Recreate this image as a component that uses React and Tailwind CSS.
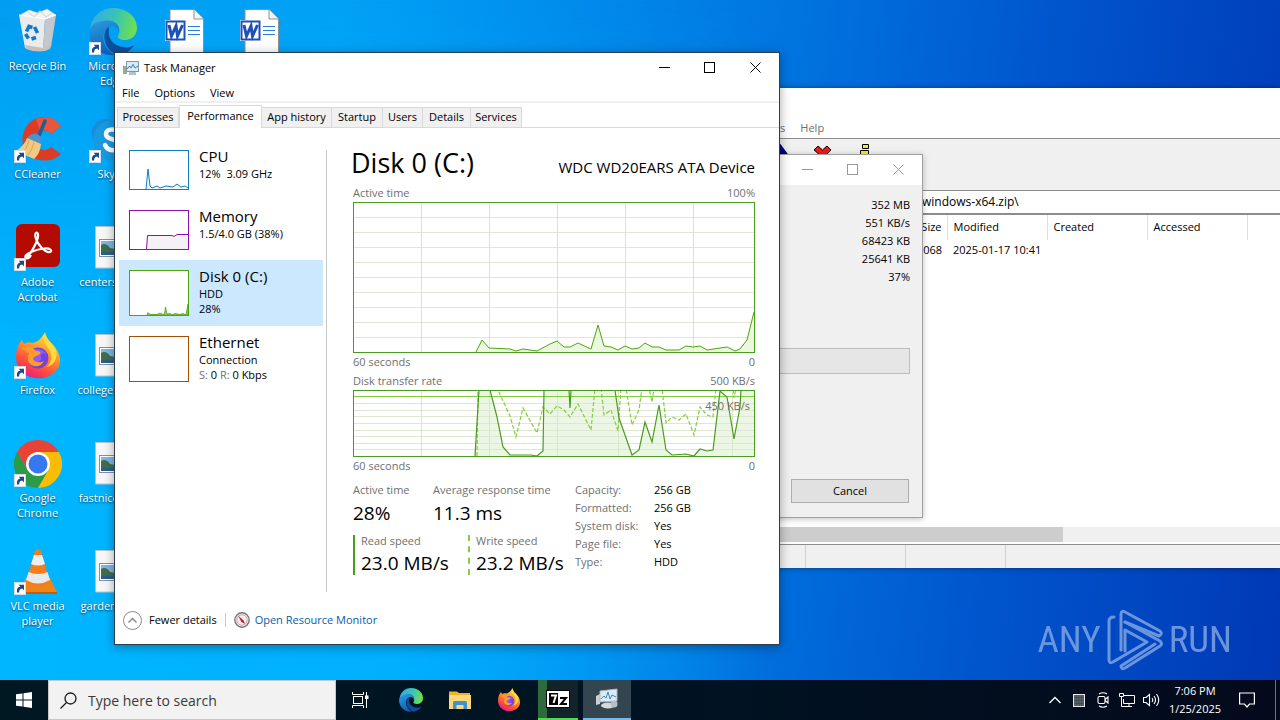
import React from "react";

const BLUE_TEXT = "text-[#0b5cad]";

/* ---------- desktop icons ---------- */

function Shortcut() {
  return (
    <g>
      <rect x="0.5" y="34.5" width="11" height="12" fill="#fff" stroke="#d5dbe3" />
      <path d="M3 44.5 C2.6 40.5 4.2 38.8 6.4 38.6 L4.6 36.8 H10 V42.2 L8.2 40.4 C5.8 40.8 5 42 5.2 44.5 Z" fill="#1d4a8a" />
    </g>
  );
}

function EdgeShape() {
  return (
    <g>
      <defs>
        <linearGradient id="edgeTop" x1="0" y1="0.3" x2="1" y2="0.5">
          <stop offset="0" stopColor="#37a9e8" />
          <stop offset="0.5" stopColor="#37c3ba" />
          <stop offset="1" stopColor="#6fe04c" />
        </linearGradient>
        <linearGradient id="edgeLeft" x1="0" y1="0" x2="0.4" y2="1">
          <stop offset="0" stopColor="#2aa0e0" />
          <stop offset="1" stopColor="#0f5fb8" />
        </linearGradient>
      </defs>
      <path d="M1 22 C2 9 12 0 24 0 C38 0 48 9 48 20 C48 27 43 32 36 32 C31 32 28 30 29 28 C32 25 31 13 20 13 C10 13 3 18 1 22 Z" fill="url(#edgeTop)" />
      <path d="M0 24 C2 15 10 12 19 12.500 C27 13 31 18 30 24 C29 19 24 17 20 19 C11 23 12 40 26 47 C12 49 0 38 0 24 Z" fill="url(#edgeLeft)" />
      <path d="M20 18.500 C12 24 14 42 29 47.500 C36 46.500 42 42 45 37.500 C36 42 22 38 20 27 C19.500 23 20 21 20 18.500 Z" fill="#0c4f9c" />
    </g>
  );
}

function EdgeIcon() {
  return (
    <svg viewBox="0 0 48 48" className="h-12 w-12" aria-hidden="true">
      <EdgeShape />
      <Shortcut />
    </svg>
  );
}

function RecycleIcon() {
  return (
    <svg viewBox="0 0 48 48" className="h-12 w-12" aria-hidden="true">
      <path d="M6 7 L15 2 L24 5 L33 1 L42 7 L38 12 H10 Z" fill="#f4f4f4" stroke="#c9ccd0" strokeWidth="0.6" />
      <path d="M14 4 L20 9 L26 3 L32 9 L38 5" stroke="#d5d8dc" fill="none" strokeWidth="1.200" />
      <path d="M5 7 L31 11 L29 43 L11 40 Z" fill="#e9ebed" />
      <path d="M31 11 L42 7 L37 39 L29 43 Z" fill="#c4c8cc" />
      <path d="M5 7 L31 11 L42 7" fill="none" stroke="#fff" strokeWidth="1" />
      <path d="M11 37 L29 40 L37 36.500 L36 41 Q26 46 12 41 Z" fill="#cdbfb6" />
      <g fill="none" stroke="#1378d0" strokeWidth="3.600">
        <path d="M12.500 23.500 L15 18.500 L18.500 19.500" />
        <path d="M20.500 19 L23.500 25" />
        <path d="M22 29.500 L17.500 31" />
        <path d="M14.500 30.500 L11.500 26" />
      </g>
    </svg>
  );
}

function WordIcon() {
  return (
    <svg viewBox="3 0 48 48" className="h-12 w-12" aria-hidden="true">
      <path d="M9 1.500 H33 L42.500 11 V47 H9 Z" fill="#fff" stroke="#8f8f8f" />
      <path d="M33 1.500 V11 H42.500" fill="#f3f3f3" stroke="#8f8f8f" />
      <g stroke="#2b7cd3" strokeWidth="1.200">
        <path d="M27 18.500 H39 M27 22.500 H39 M27 26.500 H39" />
      </g>
      <rect x="4" y="12" width="21" height="21" fill="#fff" />
      <rect x="5.500" y="13.500" width="18" height="18" fill="#fff" stroke="#1f50b5" strokeWidth="2" />
      <path d="M8 17 L10.500 28 L15 18 L16.500 28 L21.500 17" fill="none" stroke="#1f50b5" strokeWidth="3" />
    </svg>
  );
}

function CCleanerIcon() {
  return (
    <svg viewBox="0 0 48 48" className="h-12 w-12" aria-hidden="true">
      <path d="M47 10 L37 18 C31 11 22 15 21 23 C20 33 30 37 37 31 L47 38 C36 49 14 46 9 30 C6 12 18 1 30 1 C37 1 43 4 47 10 Z" fill="#dc3b26" />
      <path d="M47 10 L37 18 C34 14 29 13 26 15 L22 3 C32 -1 42 2 47 10 Z" fill="#e8563c" />
      <path d="M31 5 L24 22" stroke="#1f5e9c" strokeWidth="3.500" strokeLinecap="round" />
      <path d="M15 20 Q21 14 28 22 L26 28 L13 23 Z" fill="#4f93cc" />
      <path d="M13 22 L27 28 Q26 38 20 43 L2 35 Q10 30 13 22 Z" fill="#f3c981" />
      <path d="M15 24 Q13 33 8 37 M20 26 Q18 35 14 39" stroke="#dca552" fill="none" />
      <Shortcut />
    </svg>
  );
}

function SkypeIcon() {
  return (
    <svg viewBox="0 0 48 48" className="h-12 w-12" aria-hidden="true">
      <circle cx="17" cy="17" r="14" fill="#1b8ad8" />
      <circle cx="31" cy="31" r="14" fill="#0f6cc0" />
      <circle cx="24" cy="24" r="20" fill="#1899e2" />
      <path d="M31 18 C28 12 17 12 17 18 C17 25 31 22 31 29 C31 36 19 36 16 29" fill="none" stroke="#fff" strokeWidth="4.500" strokeLinecap="round" />
      <Shortcut />
    </svg>
  );
}

function AcrobatIcon() {
  return (
    <svg viewBox="0 0 48 48" className="h-12 w-12" aria-hidden="true">
      <rect x="2" y="0" width="44" height="43" rx="6" fill="#b30b00" />
      <path d="M12 33 C17 31 25 15 24 10 C23 7 20.500 9 21.500 13 C23 20 31 29 36 28 C39 27 36 23.500 30 24.500 C22 25.500 13 29 11.500 32 C10.500 35 14.500 36 17 31" fill="none" stroke="#fff" strokeWidth="2.200" strokeLinejoin="round" />
      <Shortcut />
    </svg>
  );
}

function FirefoxShape() {
  return (
    <g>
      <defs>
        <linearGradient id="foxBody" x1="0.800" y1="0" x2="0.300" y2="1">
          <stop offset="0" stopColor="#fff04a" />
          <stop offset="0.400" stopColor="#ff9a2c" />
          <stop offset="0.750" stopColor="#ff4a3d" />
          <stop offset="1" stopColor="#e31c8a" />
        </linearGradient>
      </defs>
      <path d="M31 0 C29 8 35 8 39 13 C48 22 48 34 41 40 C32 49 15 48 7 39 C1 32 1 22 4 14 C5 12 6 10 8 8 L10 12 C13 10 16 10 18 11 C24 10 28 6 31 0 Z" fill="url(#foxBody)" />
      <circle cx="24" cy="26" r="10.500" fill="#7643d8" />
      <path d="M16 19 C22 15 30 17 33 23 C30 20 26 21 27 25 C29 30 20 32 18 27 Z" fill="#9059ff" />
      <path d="M7 16 C13 14 19 15 22 19 C26 19 27 20 26 22 C23 24 20 24 19 27 C21 31 27 31 30 29 C27 36 17 36 14 29 C13 24 15 21 15 21 Z" fill="#ff9b28" />
      <path d="M31 0 C27 8 32 12 36 19 C39 25 37 32 32 35 C40 34 44 26 42 18 C39 11 33 9 31 0 Z" fill="#ffdc3e" />
    </g>
  );
}

function FirefoxIcon() {
  return (
    <svg viewBox="0 0 48 48" className="h-12 w-12" aria-hidden="true">
      <FirefoxShape />
      <Shortcut />
    </svg>
  );
}

function ChromeIcon() {
  return (
    <svg viewBox="0 0 48 48" className="h-12 w-12" aria-hidden="true">
      <path d="M24 12 H44.800 A24 24 0 0 1 24 48 L20 38 Z" fill="#fbbc05" />
      <path d="M3.200 12 L13.600 30 L34.400 30 L24 48 A24 24 0 0 1 3.200 12 Z" fill="#2c9b48" />
      <path d="M3.200 12 A24 24 0 0 1 44.800 12 H24 L13.600 30 Z" fill="#ea4335" />
      <circle cx="24" cy="24" r="12" fill="#fff" />
      <circle cx="24" cy="24" r="9.500" fill="#3578f0" />
      <Shortcut />
    </svg>
  );
}

function VlcIcon() {
  return (
    <svg viewBox="0 0 48 48" className="h-12 w-12" aria-hidden="true">
      <path d="M12 30 H36 L43 44 Q43 46 41 46 H7 Q5 46 5 44 Z" fill="#f08418" />
      <path d="M5 44 H43 V46 H5 Z" fill="#c45c08" />
      <path d="M21 3 Q24 -1 27 3 L36 34 Q24 43 12 34 Z" fill="#f47c1a" />
      <path d="M20 7 H28 L31 16 Q24 19 17 16 Z" fill="#eee" />
      <path d="M14.500 24 Q24 28 33.500 24 L36 32 Q24 39 12 32 Z" fill="#e9e9e9" />
      <Shortcut />
    </svg>
  );
}

function PictureIcon() {
  return (
    <svg viewBox="2 0 48 48" className="h-12 w-12" aria-hidden="true">
      <path d="M8.500 2.500 H30 L39 11 V44 H8.500 Z" fill="#f7f7f7" stroke="#b9c3cc" />
      <rect x="12.500" y="15.500" width="23" height="17" fill="#fff" stroke="#7c93ad" />
      <rect x="14" y="17" width="20" height="14" fill="#7fb4e6" />
      <path d="M14 21 Q19 18 23 24 L34 26 V28 H14 Z" fill="#3f6e4c" />
      <rect x="14" y="28" width="20" height="3" fill="#2f5d86" />
    </svg>
  );
}

function DesktopIcon({ icon, label }) {
  return (
    <button
      type="button"
      className="flex h-[108px] w-[75px] shrink-0 flex-col items-center pt-2 text-[11px] leading-[15px] text-white [text-shadow:0_1px_2px_rgba(0,0,0,0.7)]"
    >
      {icon}
      <span className="mt-[2px] whitespace-pre text-center">{label}</span>
    </button>
  );
}

const columns = [
  [
    { icon: <RecycleIcon />, label: "Recycle Bin" },
    { icon: <CCleanerIcon />, label: "CCleaner" },
    { icon: <AcrobatIcon />, label: "Adobe\nAcrobat" },
    { icon: <FirefoxIcon />, label: "Firefox" },
    { icon: <ChromeIcon />, label: "Google\nChrome" },
    { icon: <VlcIcon />, label: "VLC media\nplayer" },
  ],
  [
    { icon: <EdgeIcon />, label: "Microsoft\nEdge" },
    { icon: <SkypeIcon />, label: "Skype" },
    { icon: <PictureIcon />, label: "centersa.png" },
    { icon: <PictureIcon />, label: "collegeus.png" },
    { icon: <PictureIcon />, label: "fastnices.png" },
    { icon: <PictureIcon />, label: "gardens.png" },
  ],
  [{ icon: <WordIcon />, label: "" }],
  [{ icon: <WordIcon />, label: "" }],
];

/* ---------- window pieces ---------- */

function WindowControls({ tone }) {
  return (
    <div className={tone}>
      <div className="flex h-[30px]">
        <button type="button" aria-label="Minimize" className="flex w-[46px] items-center justify-center pb-[2px]">
          <svg viewBox="0 0 11 11" className="h-[11px] w-[11px]" fill="none" stroke="currentColor">
            <path d="M0 5.500 H11" />
          </svg>
        </button>
        <button type="button" aria-label="Maximize" className="flex w-[45px] items-center justify-center pb-[2px]">
          <svg viewBox="0 0 11 11" className="h-[11px] w-[11px]" fill="none" stroke="currentColor">
            <rect x="0.5" y="0.5" width="10" height="10" />
          </svg>
        </button>
        <button type="button" aria-label="Close" className="flex w-[47px] items-center justify-center pb-[2px]">
          <svg viewBox="0 0 11 11" className="h-[11px] w-[11px]" fill="none" stroke="currentColor">
            <path d="M0.500 0.500 L10.500 10.500 M10.500 0.500 L0.500 10.500" />
          </svg>
        </button>
      </div>
    </div>
  );
}

/* ---------- archive manager ---------- */

function ArchiveWindow() {
  return (
    <section className="absolute top-[88px] right-0 left-[640px] flex h-[480px] flex-col bg-white text-[11px] text-black shadow-[0_0_6px_rgba(0,0,0,0.4)]">
      <nav className="flex h-[51px] items-end gap-[15px] border-b border-[#8c8c8c] pb-[2px] pl-[118px] text-[#6d6d6d]">
        <button type="button" className="leading-[16px]">Tools</button>
        <button type="button" className="leading-[16px]">Help</button>
      </nav>
      <div className="flex h-[52px] items-start border-b border-[#8c8c8c] bg-[#f0f0f0] pt-[5px] pl-[127px]">
        <svg viewBox="0 0 110 30" className="h-[30px] w-[110px]" aria-hidden="true">
          <path d="M2 16 L12 -2 L23 13 V16 Z" fill="#000080" />
          <path d="M47 6 L51 2 L55.500 6 L60 2 L64 6 L59 11 L64 16 L60 19 L56 14 L52 19 L48 16 L53 11 Z" fill="#f21818" stroke="#000" />
          <path d="M95.500 0.500 H101.500 V4.500 H95.500 Z M93.500 6.500 H101.500 V18 H93.500 Z" fill="#f5ee1c" stroke="#000" />
        </svg>
      </div>
      <div className="flex h-[24px] items-center border-b-2 border-[#8c8c8c] pl-[282px] text-[12px]">windows-x64.zip\</div>
      <table className="w-[607px] table-fixed text-left">
        <colgroup>
          <col className="w-[307px]" />
          <col className="w-[100px]" />
          <col className="w-[100px]" />
          <col className="w-[100px]" />
        </colgroup>
        <thead>
          <tr className="h-[25px]">
            <th className="border-r border-[#dedede] pr-[5px] text-right font-normal">Size</th>
            <th className="border-r border-[#dedede] pl-[6px] font-normal">Modified</th>
            <th className="border-r border-[#dedede] pl-[6px] font-normal">Created</th>
            <th className="border-r border-[#dedede] pl-[6px] font-normal">Accessed</th>
          </tr>
        </thead>
        <tbody>
          <tr className="h-[20px]">
            <td className="pr-[5px] text-right">068</td>
            <td className="pl-[6px] whitespace-nowrap">2025-01-17 10:41</td>
            <td />
            <td />
          </tr>
        </tbody>
      </table>
      <div className="mt-auto h-[15px] bg-[#f0f0f0]">
        <div className="h-full w-[423px] bg-[#cdcdcd]" />
      </div>
      <div className="mt-[2px] flex h-[24px] border-t border-[#8c8c8c] bg-[#f0f0f0]">
        <div className="w-[166px] border-r border-[#d0d0d0]" />
        <div className="w-[100px] border-r border-[#d0d0d0]" />
        <div className="w-[100px] border-r border-[#d0d0d0]" />
      </div>
    </section>
  );
}

function ProgressDialog() {
  const values = ["352 MB", "551 KB/s", "68423 KB", "25641 KB", "37%"];
  return (
    <section className="absolute top-[154px] left-[560px] flex h-[364px] w-[363px] flex-col border border-[#a0a0a0] bg-[#f0f0f0] text-[11px] text-black shadow-[0_1px_6px_rgba(0,0,0,0.25)]">
      <div className="flex h-[30px] justify-end bg-white">
        <WindowControls tone="text-[#999999]" />
      </div>
      <ul className="mt-[11px] pr-[12px] text-right leading-[18px]">
        {values.map((v) => (
          <li key={v}>{v}</li>
        ))}
      </ul>
      <div role="progressbar" aria-label="Progress" className="mt-[62px] mr-[12px] h-[26px] border border-[#bcbcbc] bg-[#e6e6e6]" />
      <div className="mt-auto flex justify-end pr-[13px] pb-[14px]">
        <button type="button" className="h-[24px] w-[118px] border border-[#adadad] bg-[#e1e1e1]">
          Cancel
        </button>
      </div>
    </section>
  );
}

/* ---------- task manager ---------- */

const tabs = [
  { name: "Processes", width: "w-[62px]" },
  { name: "Performance", width: "w-[83px]" },
  { name: "App history", width: "w-[70px]" },
  { name: "Startup", width: "w-[51px]" },
  { name: "Users", width: "w-[40px]" },
  { name: "Details", width: "w-[48px]" },
  { name: "Services", width: "w-[51px]" },
];

const activePoints =
  "123,150 129,138 136,146 157,147 163,149 170,147 184,149 197,142 204,139 211,145 217,145 225,141 238,147 245,123 251,144 258,145 265,148 272,144 279,147 286,146 292,141 299,145 306,145 313,148 326,148 333,144 340,145 347,144 354,148 374,145 382,149 387,147 394,138 401,110";

const readPoints =
  "122,66 126,0 137,0 144,27 150,57 157,65 178,65 184,66 190,61 191,0 216,0 217,18 218,0 262,0 266,28 272,45 279,65 286,60 292,32 299,52 306,15 313,60 319,65 333,64 341,66 347,59 354,61 360,60 367,1 374,7 381,49 387,17 388,0 401,0";

const writePoints =
  "124,66 125,-2 145,0 157,26 163,47 170,18 184,43 190,17 197,24 204,16 211,20 217,27 225,14 238,40 242,-2 248,-2 251,25 258,20 265,41 268,-2 273,-2 279,35 286,20 289,-2 296,-2 299,12 301,-2 309,-2 313,33 319,27 326,30 333,24 341,45 347,17 354,25 360,27 363,-2 380,-2 381,8 383,-2";

function ActiveChart() {
  return (
    <svg viewBox="0 0 402 151" preserveAspectRatio="none" className="block h-[151px] w-full" role="img" aria-label="Active time">
      <rect width="402" height="151" fill="#fff" />
      {[15, 30, 45, 60, 75, 90, 105, 120, 135].map((y) => (
        <path key={y} d={`M0 ${y + 0.5} H402`} stroke="#e2e6da" />
      ))}
      {[68, 136, 204, 272, 340].map((x) => (
        <path key={x} d={`M${x + 0.5} 0 V151`} stroke="#dbe4c8" />
      ))}
      <polygon points={`${activePoints} 401,150`} fill="#e4f6d4" fillOpacity="0.75" />
      <polyline points={activePoints} fill="none" stroke="#4da60c" />
      <rect x="0.5" y="0.5" width="401" height="150" fill="none" stroke="#4b9b1e" />
    </svg>
  );
}

function TransferChart() {
  return (
    <svg viewBox="0 0 402 67" preserveAspectRatio="none" className="block h-[67px] w-full" role="img" aria-label="Disk transfer rate">
      <rect width="402" height="67" fill="#fff" />
      <polygon points={`${readPoints} 401,66`} fill="#ebf6e4" />
      {[13, 20, 26, 33, 40, 46, 53, 59].map((y) => (
        <path key={y} d={`M0 ${y + 0.5} H402`} stroke="#dde7d2" />
      ))}
      {[68, 136, 204, 265, 379].map((x) => (
        <path key={x} d={`M${x + 0.5} 0 V67`} stroke="#dae5cc" />
      ))}
      <path d="M0 6.500 H402" stroke="#86cb46" />
      <polyline points={writePoints} fill="none" stroke="#84cf3c" strokeWidth="1.200" strokeDasharray="4 2" />
      <polyline points={readPoints} fill="none" stroke="#4b9b1e" strokeWidth="1.200" />
      <rect x="0.5" y="0.5" width="401" height="66" fill="none" stroke="#4b9b1e" />
    </svg>
  );
}

const resources = [
  {
    name: "CPU",
    lines: ["12%  3.09 GHz"],
    thumb: (
      <svg viewBox="0 0 60 40" className="h-[40px] w-[60px] shrink-0" aria-hidden="true">
        <rect x="0.5" y="0.5" width="59" height="39" fill="#fff" stroke="#117dbb" />
        <path d="M17 39 L19 19 L21 36 L23 38 L28 36 L31 38 L37 36 L44 37 L48 34 L52 37 L56 36 L59 38" fill="#f1f6fa" stroke="#117dbb" />
      </svg>
    ),
  },
  {
    name: "Memory",
    lines: ["1.5/4.0 GB (38%)"],
    thumb: (
      <svg viewBox="0 0 60 40" className="h-[40px] w-[60px] shrink-0" aria-hidden="true">
        <rect x="0.5" y="0.5" width="59" height="39" fill="#fff" stroke="#8b12ae" />
        <path d="M17.500 39 L18.500 25.500 H43 L45 26.500 L48 24.500 H59 V39 Z" fill="#f4f2f4" />
        <path d="M17.500 39 L18.500 25.500 H43 L45 26.500 L48 24.500 H59" fill="none" stroke="#8b12ae" />
      </svg>
    ),
  },
  {
    name: "Disk 0 (C:)",
    selected: true,
    lines: ["HDD", "28%"],
    thumb: (
      <svg viewBox="0 0 60 46" className="h-[46px] w-[60px] shrink-0" aria-hidden="true">
        <rect x="0.5" y="0.5" width="59" height="45" fill="#fff" stroke="#4da60c" />
        <path d="M18 45 L19 42.500 L21 44.500 H28 L31 43 L34 44.500 L35.500 44 L36.500 37 L38 44 L41 43.500 L43 45 L46 43.500 L51 44.500 L54 43.500 L57 45 L59 34 V45 Z" fill="#9dd06f" stroke="#4da60c" strokeWidth="0.800" />
      </svg>
    ),
  },
  {
    name: "Ethernet",
    lines: [
      "Connection",
      <React.Fragment key="rate">
        <span className="text-[#707070]">S:</span> 0 <span className="text-[#707070]">R:</span> 0 Kbps
      </React.Fragment>,
    ],
    thumb: (
      <svg viewBox="0 0 60 46" className="h-[46px] w-[60px] shrink-0" aria-hidden="true">
        <rect x="0.5" y="0.5" width="59" height="45" fill="#fff" stroke="#a74f01" />
      </svg>
    ),
  },
];

const facts = [
  ["Capacity:", "256 GB"],
  ["Formatted:", "256 GB"],
  ["System disk:", "Yes"],
  ["Page file:", "Yes"],
  ["Type:", "HDD"],
];

function MonitorGlyph({ className }) {
  return (
    <svg viewBox="0 0 16 16" className={className} aria-hidden="true">
      <rect x="0.5" y="6.500" width="3" height="7" fill="#8fb68a" stroke="#77857a" strokeWidth="0.600" />
      <rect x="3.500" y="1.500" width="12" height="10" fill="#d8ecf8" stroke="#8296a5" />
      <path d="M4 9 L6.500 6 L8 8 L10 4.500 L12 8 L15 6" fill="none" stroke="#3a7fb8" />
      <path d="M7 12 H12 L13 14.500 H6 Z" fill="#c3c9ce" stroke="#8a9298" strokeWidth="0.500" />
    </svg>
  );
}

function TaskManager() {
  return (
    <section className="absolute top-[52px] left-[114px] flex h-[593px] w-[666px] flex-col border border-[#2c3e4c] bg-white text-[11px] text-black shadow-[0_2px_10px_rgba(0,0,0,0.35)]">
      <header className="flex h-[30px] items-center">
        <MonitorGlyph className="ml-2 h-4 w-4" />
        <h1 className="ml-[5px] flex-1 text-[11px]">Task Manager</h1>
        <WindowControls tone="text-black" />
      </header>
      <nav className="flex h-[20px] items-end gap-[15px] border-b-2 border-[#f0f0f0] pl-[7px] leading-[17px]">
        <button type="button">File</button>
        <button type="button">Options</button>
        <button type="button">View</button>
      </nav>
      <div role="tablist" className="flex h-[25px] items-end border-b border-[#d9d9d9] pl-[2px]">
        {tabs.map((tab, i) => (
          <button
            key={tab.name}
            type="button"
            role="tab"
            aria-selected={i === 1}
            className={`${tab.width} ${
              i === 1
                ? "z-10 -mb-px h-[23px] border border-b-0 border-[#d9d9d9] bg-white pb-[2px]"
                : "h-[20px] border border-b-0 border-l-0 border-[#d9d9d9] bg-[#f0f0f0] first:border-l"
            } whitespace-nowrap`}
          >
            {tab.name}
          </button>
        ))}
      </div>

      <div className="flex flex-1">
        <ul className="mt-[12px] ml-1 w-[204px]">
          {resources.map((r) => (
            <li key={r.name}>
              <button
                type="button"
                className={`flex w-full items-start py-[10px] pl-[10px] text-left ${r.selected ? "bg-[#cce8ff]" : ""}`}
              >
                {r.thumb}
                <span className="-mt-[3px] -mb-[3px] ml-[10px] flex flex-col">
                  <span className="text-[15px] leading-[19px]">{r.name}</span>
                  {r.lines.map((line, i) => (
                    <span key={i} className="leading-[15px] whitespace-pre">
                      {line}
                    </span>
                  ))}
                </span>
              </button>
            </li>
          ))}
        </ul>
        <div className="mt-[22px] mb-[4px] ml-[3px] w-px self-stretch bg-[#c8c8c8]" />

        <div className="ml-[26px] flex w-[402px] flex-col pt-[16px] text-[#707070]">
          <div className="flex h-[40px] items-baseline justify-between text-black">
            <h2 className="-ml-[2px] text-[27px] leading-[38px]">Disk 0 (C:)</h2>
            <span className="text-[15px]">WDC WD20EARS ATA Device</span>
          </div>
          <div className="flex justify-between pb-[1px] leading-[17px]">
            <span>Active time</span>
            <span>100%</span>
          </div>
          <ActiveChart />
          <div className="flex justify-between leading-[18px]">
            <span>60 seconds</span>
            <span>0</span>
          </div>
          <div className="mt-[1px] flex justify-between leading-[18px]">
            <span>Disk transfer rate</span>
            <span>500 KB/s</span>
          </div>
          <div className="relative">
            <TransferChart />
            <span className="absolute top-[9px] right-[5px] leading-[14px]">450 KB/s</span>
          </div>
          <div className="flex justify-between leading-[18px]">
            <span>60 seconds</span>
            <span>0</span>
          </div>

          <div className="mt-[6px] flex">
            <div className="w-[222px] shrink-0">
              <div className="flex">
                <div className="w-[80px]">
                  <div className="leading-[18px]">Active time</div>
                  <div className="text-[19px] leading-[28px] text-black">28%</div>
                </div>
                <div>
                  <div className="leading-[18px] whitespace-nowrap">Average response time</div>
                  <div className="text-[19px] leading-[28px] text-black">11.3 ms</div>
                </div>
              </div>
              <div className="mt-[8px] flex">
                <div className="h-[40px] w-[115px] shrink-0 border-l-2 border-[#4b9b1e] pl-[6px]">
                  <div className="leading-[12px]">Read speed</div>
                  <div className="text-[19px] leading-[32px] whitespace-nowrap text-black">23.0 MB/s</div>
                </div>
                <div className="h-[40px] border-l-2 border-dashed border-[#84cf3c] pl-[6px]">
                  <div className="leading-[12px]">Write speed</div>
                  <div className="text-[19px] leading-[32px] whitespace-nowrap text-black">23.2 MB/s</div>
                </div>
              </div>
            </div>
            <dl className="grid grid-cols-[79px_auto] content-start leading-[18px]">
              {facts.map(([k, v]) => (
                <React.Fragment key={k}>
                  <dt>{k}</dt>
                  <dd className="text-black">{v}</dd>
                </React.Fragment>
              ))}
            </dl>
          </div>
        </div>
      </div>

      <footer className="flex h-[48px] items-center pl-2">
        <button type="button" className="flex items-center gap-[7px]">
          <svg viewBox="0 0 19 19" className="h-[19px] w-[19px]" fill="none" stroke="#8a8a8a" aria-hidden="true">
            <circle cx="9.500" cy="9.500" r="9" />
            <path d="M5.500 11.500 L9.500 7.500 L13.500 11.500" strokeWidth="1.500" />
          </svg>
          Fewer details
        </button>
        <div className="mx-[8px] h-[14px] w-px bg-[#c8c8c8]" />
        <a href="#resource-monitor" className={`${BLUE_TEXT} flex items-center gap-[5px]`}>
          <svg viewBox="0 0 16 16" className="h-4 w-4" aria-hidden="true">
            <circle cx="8" cy="8" r="7.200" fill="#f4eeee" stroke="#777" strokeWidth="1.400" />
            <circle cx="8" cy="8" r="5.200" fill="none" stroke="#c9a9a9" />
            <path d="M4 3.500 L9.500 8.500 L11 12 L7.500 10 Z" fill="#c8141e" />
          </svg>
          Open Resource Monitor
        </a>
      </footer>
    </section>
  );
}

/* ---------- watermark and taskbar ---------- */

function Watermark() {
  return (
    <div className="absolute right-[48px] bottom-[8px] flex h-[64px] items-center gap-[6px] font-['Roboto_Condensed','Liberation_Sans_Narrow','Liberation_Sans',sans-serif] text-[37px] text-[#86a9e4] opacity-80">
      <span>ANY</span>
      <svg viewBox="0 0 56 64" className="h-[64px] w-[56px]" fill="none" stroke="#86a9e4" strokeWidth="3" strokeLinejoin="round" strokeLinecap="round" aria-hidden="true">
        <path d="M14 42 V6 Q14 2 18 4 L53 23 Q56 26 52 28 L18 14" />
        <path d="M18 14 L53 33 Q56 36 53 38 L18 60 Q14 62 14 58 L48 36" />
        <path d="M7 9 Q2 9 2 13 V52 Q2 56 6 54 L40 34 L18 22 V43" />
      </svg>
      <span>RUN</span>
    </div>
  );
}

function Taskbar() {
  return (
    <footer className="relative z-20 flex h-10 items-stretch bg-linear-to-r from-[#001822] via-[#001322] to-[#030a1c] text-white">
      <button type="button" aria-label="Start" className="flex w-12 items-center justify-center">
        <svg viewBox="0 0 16 16" className="h-4 w-4" fill="#fff" aria-hidden="true">
          <path d="M0 2.300 L6.500 1.400 V7.500 H0 Z M7.500 1.200 L16 0 V7.500 H7.500 Z M0 8.500 H6.500 V14.600 L0 13.700 Z M7.500 8.500 H16 V16 L7.500 14.800 Z" />
        </svg>
      </button>
      <label className="flex w-72 items-center border border-[#c4c8ca] bg-[#f2f2f2] pl-[11px] text-[#1b1b1b]">
        <svg viewBox="0 0 17 17" className="h-[17px] w-[17px] shrink-0" fill="none" stroke="currentColor" strokeWidth="1.300" aria-hidden="true">
          <circle cx="10.500" cy="6.500" r="5.500" />
          <path d="M6.500 10.500 L0.500 16.500" />
        </svg>
        <input
          type="text"
          aria-label="Search"
          placeholder="Type here to search"
          className="ml-[11px] w-full min-w-0 bg-transparent text-[14px] outline-none placeholder:text-[#3a3a3a]"
        />
      </label>
      <button type="button" aria-label="Task view" className="flex w-12 items-center justify-center">
        <svg viewBox="0 0 17 16" className="h-4 w-[17px]" fill="none" stroke="#fff" aria-hidden="true">
          <path d="M0.500 0 V2.500 H11.500 V0 M0.500 16 V13.500 H11.500 V16" />
          <rect x="1.500" y="4.500" width="9" height="7" />
          <path d="M14.500 0 V16" />
          <rect x="13.500" y="4" width="2.500" height="2.500" fill="#fff" />
        </svg>
      </button>
      <button type="button" aria-label="Microsoft Edge" className="ml-[2px] flex w-[49px] items-center justify-center">
        <svg viewBox="0 0 48 48" className="h-6 w-6" aria-hidden="true">
          <EdgeShape />
        </svg>
      </button>
      <button type="button" aria-label="File Explorer" className="flex w-[49px] items-center justify-center">
        <svg viewBox="0 0 24 20" className="h-5 w-6" aria-hidden="true">
          <path d="M1 1.500 H9 L11 3 H22 V18 H1 Z" fill="#f0b12c" />
          <path d="M1 5 H23 V19 H1 Z" fill="#fcd975" />
          <path d="M5 19 V12.500 Q5 11 6.500 11 H17.500 Q19 11 19 12.500 V19 H15.500 V15 H8.500 V19 Z" fill="#3c92d4" />
        </svg>
      </button>
      <button type="button" aria-label="Firefox" className="flex w-[49px] items-center justify-center">
        <svg viewBox="0 0 48 48" className="h-6 w-6" aria-hidden="true">
          <FirefoxShape />
        </svg>
      </button>
      <button type="button" aria-label="7-Zip" className="ml-[5px] flex w-[40px] items-center justify-center border-b-2 border-[#4be04b] bg-linear-to-r from-[#2f6a3c] from-[22%] to-[#12242a] to-[23%]">
        <svg viewBox="0 0 24 18" className="h-[18px] w-6" aria-hidden="true">
          <rect x="0.5" y="0.5" width="23" height="17" fill="#fff" stroke="#000" />
          <rect x="3" y="3" width="9" height="12" fill="#000" />
          <path d="M5 5.500 H10 L7.500 13" fill="none" stroke="#fff" strokeWidth="2" />
          <path d="M14 8 H20 L15 14 H21" fill="none" stroke="#000" strokeWidth="2" />
        </svg>
      </button>
      <button type="button" aria-label="Task Manager" className="ml-[5px] flex w-[48px] items-center justify-center border-b-2 border-[#76b9ed] bg-[#33454f]">
        <svg viewBox="0 0 24 22" className="h-[22px] w-6" aria-hidden="true">
          <path d="M1 8 L5 6 V16 L1 17 Z" fill="#c9d0d3" />
          <path d="M5 3 L22 1 V13 L5 14 Z" fill="#dcebf5" stroke="#aab8c2" />
          <path d="M6 11 L9 8 L11 10 L13 4 L15 11 L17 7 L21 9" fill="none" stroke="#3d86bd" />
          <ellipse cx="13" cy="17.500" rx="7" ry="3" fill="#d5d9dc" />
          <circle cx="19" cy="16" r="3.500" fill="#b8bfc4" />
        </svg>
      </button>

      <div className="ml-auto flex items-center">
        <button type="button" aria-label="Show hidden icons" className="flex w-6 justify-center">
          <svg viewBox="0 0 12 8" className="h-2 w-3" fill="none" stroke="#fff" strokeWidth="1.300" aria-hidden="true">
            <path d="M0.500 7 L6 1.500 L11.500 7" />
          </svg>
        </button>
        <button type="button" aria-label="Input indicator" className="flex w-6 justify-center">
          <svg viewBox="0 0 12 13" className="h-[13px] w-3" aria-hidden="true">
            <rect x="0.5" y="0.5" width="11" height="12" fill="#59636b" stroke="#e8eaec" />
            <path d="M1 3.500 H11 M1 6.500 H11 M1 9.500 H11 M3.500 1 V12 M6 1 V12 M8.500 1 V12" stroke="#37444e" strokeWidth="0.600" />
          </svg>
        </button>
        <button type="button" aria-label="Meet now" className="flex w-6 justify-center">
          <svg viewBox="0 0 12 16" className="h-4 w-3" fill="none" stroke="#fff" strokeWidth="1.100" aria-hidden="true">
            <path d="M2 2 Q6 -0.500 10 2 M2 14 Q6 16.500 10 14" />
            <rect x="1" y="4.500" width="7" height="7" rx="1.500" />
            <path d="M8 7.500 L11 5 V11 L8 8.500" />
          </svg>
        </button>
        <button type="button" aria-label="Network" className="flex w-6 justify-center">
          <svg viewBox="0 0 16 14" className="h-[14px] w-4" fill="none" stroke="#fff" aria-hidden="true">
            <path d="M5 2.500 H15.500 V10.500 H4.500 V6 M10 10.500 V13 M6 13.500 H13" />
            <path d="M0.500 0.500 H4.500 V3.500 H0.500 Z M2.500 3.500 V13.500 H6" />
          </svg>
        </button>
        <button type="button" aria-label="Volume" className="flex w-6 justify-center">
          <svg viewBox="0 0 17 14" className="h-[14px] w-[17px]" fill="none" stroke="#fff" strokeWidth="1.100" aria-hidden="true">
            <path d="M0.500 4.500 H3 L6.500 1.500 V12.500 L3 9.500 H0.500 Z" />
            <path d="M9 5 Q10.500 7 9 9 M11 3 Q14 7 11 11 M13.500 1 Q18 7 13.500 13" />
          </svg>
        </button>
        <div className="w-[64px] text-center text-[11px] leading-[18px]">
          <div>7:06 PM</div>
          <div>1/25/2025</div>
        </div>
        <button type="button" aria-label="Notifications" className="flex w-10 justify-center">
          <svg viewBox="0 0 16 16" className="h-4 w-4" fill="none" stroke="#fff" strokeWidth="1.200" aria-hidden="true">
            <path d="M0.600 1 H15.400 V12 H10.500 L8 15 L5.500 12 H0.600 Z" />
          </svg>
        </button>
        <div className="ml-[8px] h-10 w-[5px] border-l border-[#6d7380]" />
      </div>
    </footer>
  );
}

export default function App() {
  return (
    <div className="flex min-h-screen flex-col overflow-hidden font-['Open_Sans','Noto_Sans',sans-serif]">
      <main className="relative flex flex-1 overflow-hidden bg-[linear-gradient(97deg,#009ef2_0%,#00a2f6_25%,#0088ea_45%,#0072de_60%,#0056ce_77%,#0040bc_94%,#0038b4_100%)]">
        <div className="absolute inset-0 bg-[linear-gradient(to_right,#00b6ff_0%,#00b0ff_30%,transparent_60%)] [mask-image:linear-gradient(to_bottom,transparent_0%,black_55%)]" />
        <div className="relative flex">
          {columns.map((items, c) => (
            <div key={c} className="flex w-[75px] flex-col">
              {items.map((item, i) => (
                <DesktopIcon key={i} icon={item.icon} label={item.label} />
              ))}
            </div>
          ))}
        </div>
        <ArchiveWindow />
        <ProgressDialog />
        <TaskManager />
        <Watermark />
      </main>
      <Taskbar />
    </div>
  );
}
